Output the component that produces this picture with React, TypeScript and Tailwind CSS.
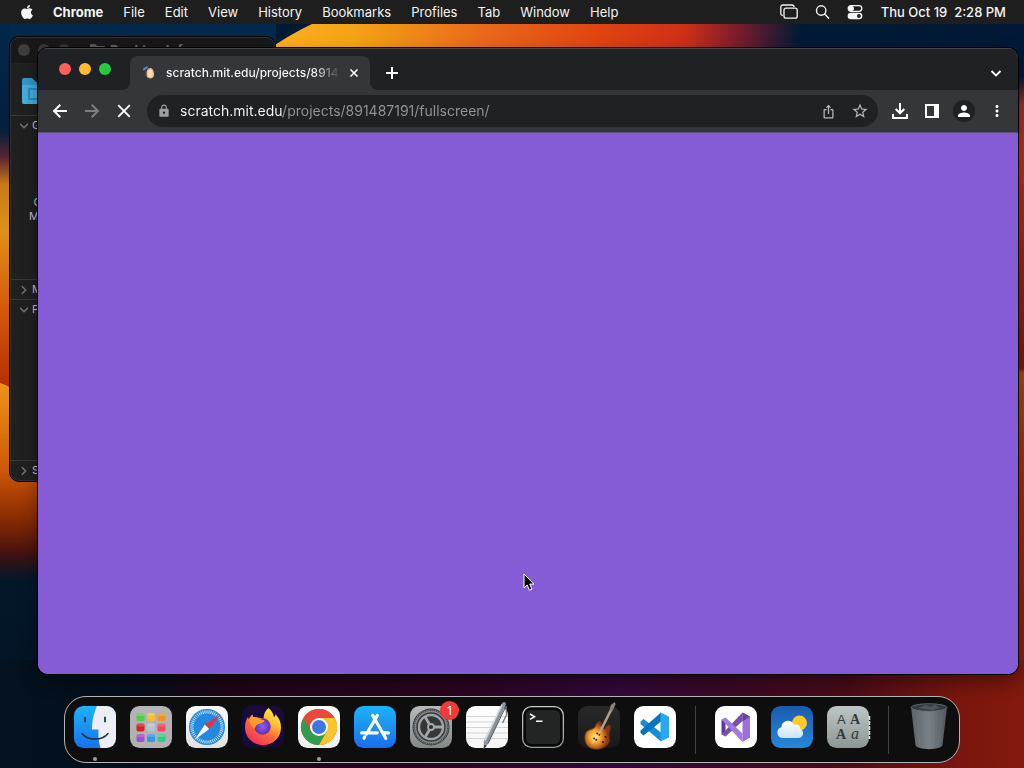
import React from "react";
import { FaApple } from "react-icons/fa";
import { MdIosShare, MdLock, MdStarBorder, MdMoreVert, MdPerson } from "react-icons/md";

const menus = ["File", "Edit", "View", "History", "Bookmarks", "Profiles", "Tab", "Window", "Help"];

function Wallpaper() {
  return (
    <svg
      className="absolute inset-0 h-full w-full"
      viewBox="0 0 1024 768"
      preserveAspectRatio="none"
      aria-hidden="true"
    >
      <defs>
        <linearGradient id="wTop" x1="276" x2="800" y1="0" y2="0" gradientUnits="userSpaceOnUse">
          <stop offset="0" stopColor="#fcae1c" />
          <stop offset=".15" stopColor="#f5a215" />
          <stop offset=".4" stopColor="#e9671a" />
          <stop offset=".62" stopColor="#df4410" />
          <stop offset=".78" stopColor="#cd3018" />
          <stop offset=".88" stopColor="#7c1c2c" />
          <stop offset="1" stopColor="#001a35" />
        </linearGradient>
        <linearGradient id="wLeft" x1="0" x2="0" y1="0" y2="768" gradientUnits="userSpaceOnUse">
          <stop offset="0" stopColor="#02284c" />
          <stop offset=".17" stopColor="#04203c" />
          <stop offset=".205" stopColor="#5a2433" />
          <stop offset=".24" stopColor="#c67a15" />
          <stop offset=".3" stopColor="#e09018" />
          <stop offset=".4" stopColor="#d65a0c" />
          <stop offset=".5" stopColor="#b82f04" />
          <stop offset=".6" stopColor="#bd4004" />
          <stop offset=".67" stopColor="#8a2603" />
          <stop offset=".72" stopColor="#431010" />
          <stop offset=".755" stopColor="#03172a" />
          <stop offset="1" stopColor="#03131f" />
        </linearGradient>
        <linearGradient id="wLobe" x1="0" x2="0" y1="383" y2="560" gradientUnits="userSpaceOnUse">
          <stop offset="0" stopColor="#ee9418" />
          <stop offset=".5" stopColor="#cf5606" />
          <stop offset="1" stopColor="#5a1706" stopOpacity="0" />
        </linearGradient>
        <linearGradient id="wRight" x1="0" x2="0" y1="0" y2="768" gradientUnits="userSpaceOnUse">
          <stop offset="0" stopColor="#001a35" />
          <stop offset=".1" stopColor="#03193a" />
          <stop offset=".135" stopColor="#96302c" />
          <stop offset=".2" stopColor="#b9321c" />
          <stop offset=".48" stopColor="#7a1813" />
          <stop offset=".485" stopColor="#a04a14" />
          <stop offset=".62" stopColor="#a22c0c" />
          <stop offset="1" stopColor="#7c180e" />
        </linearGradient>
        <linearGradient id="wBottom">
          <stop offset="0" stopColor="#03131f" />
          <stop offset=".13" stopColor="#050d1c" />
          <stop offset=".22" stopColor="#200617" />
          <stop offset=".45" stopColor="#2a0520" />
          <stop offset=".6" stopColor="#33083a" />
          <stop offset=".7" stopColor="#3a0928" />
          <stop offset=".82" stopColor="#480b19" />
          <stop offset=".94" stopColor="#7a160e" />
          <stop offset="1" stopColor="#821a0c" />
        </linearGradient>
      </defs>
      <rect width="1024" height="768" fill="#001a35" />
      <rect width="276" height="768" fill="url(#wLeft)" />
      <rect x="10" width="266" height="140" fill="#02284c" />
      <path d="M0 383Q24 391 40 412V570H0Z" fill="url(#wLobe)" />
      <path d="M262 54Q286 36 318 21H800V60H262Z" fill="url(#wTop)" />
      <rect x="1000" width="24" height="768" fill="url(#wRight)" />
      <rect y="660" width="1024" height="108" fill="url(#wBottom)" />
    </svg>
  );
}

function MenuBar() {
  return (
    <header className="relative flex h-6 items-center justify-between bg-[#1e1e1e] pr-[18px] pl-[19px] text-[13px] leading-6 text-[#f4f4f4]">
      <nav className="flex items-center gap-5" aria-label="Application menu">
        <button aria-label="Apple menu" className="-mr-[2px]">
          <FaApple size={16} />
        </button>
        <button className="font-bold">Chrome</button>
        {menus.map((m) => (
          <button key={m}>{m}</button>
        ))}
      </nav>
      <div className="flex items-center">
        <button aria-label="Screen mirroring" className="mr-[17px]">
          <svg width="18" height="16" viewBox="0 0 18 16" fill="none" stroke="currentColor" strokeWidth="1.3">
            <path d="M2.800 11.500A2 2 0 0 1 .8 9.500V3A2 2 0 0 1 2.800 1h9.200a2 2 0 0 1 2 2" />
            <rect x="4" y="4.200" width="13.200" height="10" rx="2" />
          </svg>
        </button>
        <button aria-label="Spotlight search" className="mr-[17px]">
          <svg width="15" height="16" viewBox="0 0 15 16" fill="none" stroke="currentColor" strokeWidth="1.4" strokeLinecap="round">
            <circle cx="6.200" cy="6.500" r="4.700" />
            <path d="m9.700 10 4 4.200" />
          </svg>
        </button>
        <button aria-label="Control center" className="mr-[18px]">
          <svg width="16" height="16" viewBox="0 0 16 16">
            <rect x="1.200" y="1.700" width="13.600" height="5.600" rx="2.800" fill="none" stroke="currentColor" strokeWidth="1.300" />
            <circle cx="4.200" cy="4.500" r="2.700" fill="currentColor" />
            <rect x=".6" y="8.700" width="14.800" height="6.600" rx="3.300" fill="currentColor" />
            <circle cx="11.900" cy="12" r="1.900" fill="#1e1e1e" />
          </svg>
        </button>
        <time className="font-medium whitespace-pre">Thu Oct 19  2:28 PM</time>
      </div>
    </header>
  );
}

function Chevron({ open }: { open?: boolean }) {
  return (
    <svg width="10" height="10" viewBox="0 0 10 10" fill="none" stroke="#777" strokeWidth="1.400" strokeLinecap="round">
      <path d={open ? "M1.500 3.200 5 6.700 8.500 3.200" : "M3.200 1.500 6.700 5 3.200 8.500"} />
    </svg>
  );
}

function InfoRow({ label, open }: { label: string; open?: boolean }) {
  return (
    <button className="flex h-5 w-full items-center gap-[3px] border-t border-[#393939] pl-[9px] text-left">
      <Chevron open={open} />
      {label}
    </button>
  );
}

function InfoWindow() {
  return (
    <section
      aria-label="Desktop Info"
      className="absolute top-3 left-[9px] h-[446px] w-[267px] overflow-hidden rounded-[10px] border border-black bg-[#202021] text-[11px] text-[#c4c4c4] outline outline-[#303030] -outline-offset-2"
    >
      <div className="flex h-[26px] items-center bg-[#181818] pl-2">
        <div className="flex gap-2">
          <span className="size-3 rounded-full bg-[#3d3d3d]" />
          <span className="size-3 rounded-full bg-[#363636]" />
          <span className="size-3 rounded-full bg-[#363636]" />
        </div>
        <svg className="ml-5" width="15" height="14" viewBox="0 0 15 14" aria-hidden="true">
          <path d="M0 2a1 1 0 0 1 1-1h4l2 2h7a1 1 0 0 1 1 1v8H0Z" fill="#5c5c5c" />
        </svg>
        <h2 className="ml-[5px] text-[13px] leading-5 font-bold text-[#666]">Desktop Info</h2>
      </div>
      <div className="h-[52px] pt-[15px] pl-3">
        <svg width="34" height="26" viewBox="0 0 34 26" aria-hidden="true">
          <path d="M0 2a2 2 0 0 1 2-2h8l4 4h18a2 2 0 0 1 2 2v18a2 2 0 0 1-2 2H2a2 2 0 0 1-2-2Z" fill="#3299c9" />
          <path d="M0 7h34v17a2 2 0 0 1-2 2H2a2 2 0 0 1-2-2Z" fill="#45afe0" />
          <path d="M7 11h20v10H7Z" fill="none" stroke="#2d89b5" strokeWidth="2" />
        </svg>
      </div>
      <InfoRow label="General:" open />
      <dl className="h-36 w-[68px] pt-[60px] text-right leading-[14px]">
        <dt>Created:</dt>
        <dt>Modified:</dt>
      </dl>
      <InfoRow label="More Info:" />
      <InfoRow label="Preview:" open />
      <div className="h-[141px]" />
      <InfoRow label="Sharing &amp; Permissions:" />
    </section>
  );
}

function TabStrip() {
  return (
    <div className="flex h-[42px] items-end border-t border-[#45464a] bg-[#202124] pl-[21px]">
      <div className="flex gap-2 self-start pt-[14px]">
        <button aria-label="Close window" className="size-3 rounded-full bg-[#ff5f57]" />
        <button aria-label="Minimize window" className="size-3 rounded-full bg-[#febc2e]" />
        <button aria-label="Zoom window" className="size-3 rounded-full bg-[#28c840]" />
      </div>
      <div className="relative ml-[19px] flex h-[34px] w-60 items-center rounded-t-lg bg-[#35363a] pl-[13px] text-white">
        <span className="absolute bottom-0 -left-2 size-2 bg-[radial-gradient(circle_at_0_0,#202124_8px,#35363a_8px)]" />
        <span className="absolute -right-2 bottom-0 size-2 bg-[radial-gradient(circle_at_100%_0,#202124_8px,#35363a_8px)]" />
        <svg width="13" height="14" viewBox="0 0 13 14" aria-hidden="true">
          <path d="M.8 3.500 4 1.200" stroke="#5b8fe0" strokeWidth="1.800" strokeLinecap="round" />
          <path d="M4.200 4C5 2 8 1 9.500 3c1.300 2 2 5 1.300 7.300C10 13 5 13.200 3.800 10.500 3 8.500 3.300 6 4.200 4Z" fill="#efb87e" />
          <path d="M5.500 4.500c1-1 2.800-1.300 3.500 0 .8 1.700 1 4 .3 5.500-.8 1.500-3.400 1.200-4 0-.8-1.600-.6-4 .2-5.500Z" fill="#ffe0b7" />
          <path d="M3 5v5" stroke="#7b5330" />
        </svg>
        <a
          href="#tab"
          className="ml-[10px] w-[172px] overflow-hidden bg-[linear-gradient(90deg,#fff_148px,#35363a_174px)] bg-clip-text text-[12px] leading-4 font-medium whitespace-nowrap text-transparent"
        >
          scratch.mit.edu/projects/8914
        </a>
        <button aria-label="Close tab" className="ml-[11px]">
          <svg width="10" height="10" viewBox="0 0 10 10" stroke="#fff" strokeWidth="1.600">
            <path d="m1.500 1.500 7 7m0-7-7 7" />
          </svg>
        </button>
      </div>
      <button aria-label="New tab" className="mb-[11px] ml-4">
        <svg width="12" height="12" viewBox="0 0 12 12" stroke="#fff" strokeWidth="2">
          <path d="M6 0v12M0 6h12" />
        </svg>
      </button>
      <button aria-label="Search tabs" className="mr-4 mb-[11px] ml-auto">
        <svg width="12" height="12" viewBox="0 0 12 12" fill="none" stroke="#fff" strokeWidth="1.800">
          <path d="m1.500 4 4.500 4.500L10.500 4" />
        </svg>
      </button>
    </div>
  );
}

function Toolbar() {
  return (
    <div className="flex h-[43px] items-center border-b border-[#5a4f7c] bg-[#35363a] pl-[14px] text-white">
      <button aria-label="Back">
        <svg width="16" height="16" viewBox="0 0 16 16" fill="none" stroke="#fff" strokeWidth="2">
          <path d="M15 8H2.500M8.300 1.700 2 8l6.300 6.300" />
        </svg>
      </button>
      <button aria-label="Forward" className="ml-4">
        <svg width="16" height="16" viewBox="0 0 16 16" fill="none" stroke="#7d7e82" strokeWidth="2">
          <path d="M1 8h12.500M7.700 1.700 14 8l-6.300 6.300" />
        </svg>
      </button>
      <button aria-label="Stop loading" className="ml-4">
        <svg width="16" height="16" viewBox="0 0 16 16" stroke="#fff" strokeWidth="1.900">
          <path d="m2.200 2.200 11.600 11.600m0-11.600L2.200 13.800" />
        </svg>
      </button>
      <div className="ml-[15px] flex h-8 flex-1 items-center rounded-full bg-[#202124] pr-[9px] pl-[10px] text-[#b5b8bc]">
        <MdLock size={14} color="#9aa0a6" />
        <input
          aria-label="Address"
          defaultValue="scratch.mit.edu/projects/891487191/fullscreen/"
          spellCheck={false}
          className="ml-[9px] min-w-0 flex-1 bg-[linear-gradient(90deg,#fff_103px,#92969c_103px)] bg-clip-text text-[14px] leading-5 text-transparent caret-white outline-none"
        />
        <button aria-label="Share">
          <MdIosShare size={15} />
        </button>
        <button aria-label="Bookmark this page" className="ml-[15px]">
          <MdStarBorder size={18} />
        </button>
      </div>
      <button aria-label="Downloads" className="ml-[14px]">
        <svg width="16" height="16" viewBox="0 0 16 16" fill="none" stroke="#fff" strokeWidth="2">
          <path d="M8 0v10M3.700 6 8 10.300 12.300 6M1 11v4h14v-4" />
        </svg>
      </button>
      <button aria-label="Side panel" className="ml-[17px]">
        <svg width="14" height="14" viewBox="0 0 14 14" fill="#fff" fillRule="evenodd">
          <path d="M0 0h14v14H0ZM2 2v10h7V2Z" />
        </svg>
      </button>
      <button aria-label="Profile" className="ml-[14px] flex size-[22px] items-center justify-center rounded-full bg-[#202124]">
        <MdPerson size={18} />
      </button>
      <button aria-label="More options" className="mr-3 ml-[13px]">
        <MdMoreVert size={18} />
      </button>
    </div>
  );
}

function Tile({ id, from, to, children }: { id: string; from: string; to: string; children?: React.ReactNode }) {
  return (
    <svg width="42" height="42" viewBox="0 0 42 42" overflow="visible" aria-hidden="true">
      <defs>
        <linearGradient id={id} x1="0" x2="0" y1="0" y2="1">
          <stop stopColor={from} />
          <stop offset="1" stopColor={to} />
        </linearGradient>
        <clipPath id={id + "-clip"}>
          <rect width="42" height="42" rx="9.500" />
        </clipPath>
      </defs>
      <rect width="42" height="42" rx="9.500" fill={`url(#${id})`} />
      {children}
    </svg>
  );
}

const padColors = ["#4fce4a", "#f5bd30", "#f0932a", "#d32424", "#b6c4ca", "#ea4a62", "#a04ecb", "#3296e8", "#37c983"];
const ticks = Array.from({ length: 48 }, (_, i) => i * 7.5);

const finder = (
  <Tile id="finder" from="#1fb3fb" to="#1771ee">
    <g clipPath="url(#finder-clip)">
      <path d="M23 0C20 7 18 14 18 23.500h6.500C24 31 25 37 26.500 42H42V0Z" fill="#eceef3" />
    </g>
    <path d="M11 11.500v4M31 11.500v4" stroke="#17384f" strokeWidth="1.800" strokeLinecap="round" />
    <path d="M8 27.500c6 7.500 20 7.500 26 0" fill="none" stroke="#1f3445" strokeWidth="1.600" strokeLinecap="round" />
  </Tile>
);

const launchpad = (
  <Tile id="launchpad" from="#b4b4b6" to="#b0b0b3">
    {padColors.map((c, i) => (
      <g key={c} transform={`translate(${6.5 + (i % 3) * 10.5} ${7 + Math.floor(i / 3) * 10.5})`}>
        <rect width="8" height="8" rx="1.800" fill={c} />
        <rect width="8" height="3" rx="1.500" fill="#fff" opacity=".18" />
      </g>
    ))}
  </Tile>
);

const safari = (
  <Tile id="safari" from="#fafafa" to="#dfe1e4">
    <circle cx="21" cy="21" r="18" fill="#2388df" />
    {ticks.map((a) => (
      <path key={a} d="M21 4.300v3.200" stroke="#e9f5ff" strokeWidth=".8" transform={`rotate(${a} 21 21)`} />
    ))}
    <path d="m35 8.500-16.200 10 4.400 4.600Z" fill="#e9303b" />
    <path d="m8.500 34 10.300-15.500 4.400 4.600Z" fill="#f8f9fa" />
  </Tile>
);

const firefox = (
  <Tile id="firefox" from="#1b0b3c" to="#140a38">
    <defs>
      <linearGradient id="ffBody" x1=".85" y1="0" x2=".2" y2="1">
        <stop offset="0" stopColor="#fff04f" />
        <stop offset=".3" stopColor="#ffc52f" />
        <stop offset=".6" stopColor="#ff673b" />
        <stop offset="1" stopColor="#ee2860" />
      </linearGradient>
      <radialGradient id="ffCore">
        <stop stopColor="#8a61f5" />
        <stop offset="1" stopColor="#622bb4" />
      </radialGradient>
    </defs>
    <path
      d="M26.500 2c2.500 2.300 5 5.200 5.500 9.200 1-.8 1.500-2 1.200-3.300 4 4 6 8.500 5.800 14C38.600 32 31 39 21.300 39 11 39 3 31.500 3 21.500 3 17 4.200 13.600 6 11l.8 2.600C7.500 11.400 8.700 9.700 10.500 8.500L11.500 12c2-.6 3.800-.7 5.500-.2l4.600.7C21.400 8 23.500 4.500 26.500 2Z"
      fill="url(#ffBody)"
    />
    <circle cx="20.500" cy="20.500" r="8.200" fill="url(#ffCore)" />
    <path d="M8 11.500c3.500-1.200 7-.6 9.500 1.500l5 1.200c-.5 2.200-2.500 2.900-5 3.500-3 .7-4.200 2-4.500 5C9 20.500 6.500 15.500 8 11.500Z" fill="#ff9a2c" />
  </Tile>
);

const chrome = (
  <Tile id="chrome" from="#fff" to="#eeeeec">
    <circle cx="21" cy="21" r="18" fill="#e9493a" />
    <path d="M5.400 12A18 18 0 0 0 21 39l7.800-13.500L21 21l-7.800 4.500Z" fill="#2f9d4b" />
    <path d="M36.600 12A18 18 0 0 1 21 39l7.800-13.500L28 16l-7-4Z" fill="#fbc42c" />
    <path d="M5.400 12a18 18 0 0 1 31.200 0H21a9 9 0 0 0-7.800 13.500Z" fill="#e9493a" />
    <circle cx="21" cy="21" r="9" fill="#fff" />
    <circle cx="21" cy="21" r="7" fill="#3b78e0" />
  </Tile>
);

const appStore = (
  <Tile id="appstore" from="#1db3f8" to="#1a6eec">
    <g stroke="#fff" strokeWidth="3.200" strokeLinecap="round">
      <path d="M23.300 9.500 12.500 28M18.700 9.500l13 22.800M7.500 26.800h15.700M29.500 26.800h5M10.700 31l-.7 1.200" />
    </g>
  </Tile>
);

const settings = (
  <Tile id="settings" from="#b7babb" to="#858888">
    <circle cx="21" cy="21" r="18.500" fill="#3a3e40" />
    <circle cx="21" cy="21" r="15.500" fill="none" stroke="#85898c" strokeWidth="1.500" />
    <circle cx="21" cy="21" r="17" fill="none" stroke="#85898c" strokeWidth="1.200" strokeDasharray="1.200 1" />
    <circle cx="21" cy="21" r="12" fill="#33373a" stroke="#a0a4a6" strokeWidth="2.400" />
    <path d="M21 21h12M21 21l-6-10.400M21 21l-6 10.400" stroke="#a5a8aa" strokeWidth="2.800" />
    <circle cx="21" cy="21" r="3" fill="#2d3032" stroke="#a5a8aa" strokeWidth="1.800" />
  </Tile>
);

const textEdit = (
  <Tile id="textedit" from="#fff" to="#f5f5f5">
    <path d="M0 10.500h42M0 16h42M0 21.500h42M0 27h42M0 32.500h42" stroke="#cfcfcf" strokeWidth=".9" />
    <path d="M36.500-3.200c1.800-1.700 4 0 3.300 2L23 36.500l-5.500 7 .3-8.500Z" fill="#8b949a" />
    <path d="M36-1.500 19 34.500" stroke="#d8dfe3" strokeWidth="1.500" />
    <path d="M39.800.5 22 37.500" stroke="#525c63" strokeWidth="1" />
    <path d="m40 0 .5 9-4 8" fill="none" stroke="#707b82" strokeWidth="1.300" />
    <path d="m18.500 39-1.200 4.500 3.500-4" fill="#353b40" />
  </Tile>
);

const terminal = (
  <Tile id="terminal" from="#c6c8c9" to="#9a9c9d">
    <rect x="1.300" y="1.300" width="39.400" height="39.400" rx="8.300" fill="#080808" />
    <rect x="4" y="4" width="34" height="34" rx="5.500" fill="#232525" />
    <path d="m8 8 4.500 2.700L8 13.400M14 15.300h6.500" fill="none" stroke="#fff" strokeWidth="1.500" />
  </Tile>
);

const garageBand = (
  <Tile id="garageband" from="#292929" to="#191919">
    <defs>
      <radialGradient id="gbBody" cx=".4" cy=".55">
        <stop stopColor="#fff08a" />
        <stop offset=".45" stopColor="#f7a52d" />
        <stop offset="1" stopColor="#8b3518" />
      </radialGradient>
    </defs>
    <path
      d="M8 26c2.500-3 6-2 8.500-4.500 1.500-2 1.500-5.500 5-6 2.500 0 2 2.500 1.700 4.500l3.300 3c1.500-1.500 1.800-4 4.300-4 2.500.3 1.700 3.500 1.200 5.500-.6 2.500-1.500 4-.5 6.500 1.500 5-2.500 10.500-10 12C14 44.500 7.500 40.500 7 34.500c-.3-3-.5-6 1-8.500Z"
      fill="url(#gbBody)"
      stroke="#5b2f1f"
      strokeWidth=".8"
    />
    <path d="M22.500 25 33 4" stroke="#b59c88" strokeWidth="2.600" />
    <path d="m31.500 4.500 1.300-5.500 4-3 .7 2.300-3.200 7.200Z" fill="#8b8580" />
    <path d="m18.500 27 3.500 2.200M15.500 32l3.500 2.200" stroke="#3e2317" strokeWidth="1.600" />
    <path d="M22.500 25 14 38" stroke="#f5dfb5" strokeWidth=".8" />
    <circle cx="27.500" cy="31" r="1" fill="#2d160f" />
    <circle cx="25" cy="36" r="1" fill="#2d160f" />
  </Tile>
);

const vsCode = (
  <Tile id="vscode" from="#fff" to="#fff">
    <path d="M6.500 15.500 9.500 13 27 26.500v9L6.500 18Z" fill="#158bdb" />
    <path d="m6.500 27 3 2.500L27 15.500v-9L6.500 24.500Z" fill="#0873be" />
    <path d="m26.500 6.500 8.500 4v21l-8.500 4Z" fill="#28a8ee" />
  </Tile>
);

const visualStudio = (
  <Tile id="vs" from="#fff" to="#fff">
    <path d="m6.500 13.500 4 2.500v10l-4 2.500Z" fill="#5c3c91" />
    <path d="m10.500 30.500-4-2L27.500 6.500V15Z" fill="#7551b4" />
    <path d="m10.500 11.500 17 16v8.500L6.500 13.500Z" fill="#a07ade" />
    <path d="m27.500 6.500 7.500 4v21l-7.500 4.500Z" fill="#9b70dc" />
    <path d="m27.500 6.500 7.500 4-7.500 5Z" fill="#6840a2" />
  </Tile>
);

const weather = (
  <Tile id="weather" from="#1a5bb0" to="#2488dc">
    <defs>
      <linearGradient id="cloud" x1="0" x2="0" y1="0" y2="1">
        <stop stopColor="#fff" />
        <stop offset="1" stopColor="#c9e3fb" />
      </linearGradient>
    </defs>
    <circle cx="28.500" cy="17" r="7.500" fill="#ffc928" />
    <path d="M11.500 32a5.500 5.500 0 0 1-1-10.800c0-7 10-8.800 12.500-2.500 4-1 6.500 1.500 6.500 4.300 4.500 2.500 2.500 9-2 9Z" fill="url(#cloud)" />
  </Tile>
);

const fontBook = (
  <Tile id="fontbook" from="#bec5c5" to="#8d9595">
    <path d="M42.500 10v23" stroke="#dfe4e4" strokeWidth="1.500" strokeDasharray="4 1" />
    <g fill="#343a3a" fontSize="14">
      <text x="10" y="18" fontFamily="Liberation Sans, sans-serif" fontSize="13">A</text>
      <text x="23" y="18" fontFamily="Liberation Serif, serif" fontWeight="700">A</text>
      <text x="9" y="33" fontFamily="Liberation Serif, serif" fontWeight="700">A</text>
      <text x="24" y="33" fontFamily="Liberation Serif, serif" fontStyle="italic" fontSize="16">a</text>
    </g>
  </Tile>
);

const trash = (
  <svg width="42" height="42" viewBox="0 0 42 42" overflow="visible" aria-hidden="true">
    <defs>
      <linearGradient id="bin">
        <stop stopColor="#5b6369" />
        <stop offset=".5" stopColor="#7a8186" />
        <stop offset="1" stopColor="#50575d" />
      </linearGradient>
    </defs>
    <path d="M3 1h36l-4.500 38c-.8 5.500-26.200 5.500-27 0Z" fill="url(#bin)" />
    <ellipse cx="21" cy="1.500" rx="18" ry="3.800" fill="#343a3e" stroke="#6d7478" strokeWidth=".8" />
    <path d="M10 2 18-1l4 2 5-2 5 3-8 2Z" fill="#50575b" />
    <path d="m9 9 3 31M17 9l1 33M26 9l-1 33M34 9l-4 31" stroke="#91989d" strokeWidth=".6" opacity=".3" />
  </svg>
);

type DockItem = { name: string; icon: React.ReactNode; running?: boolean; badge?: string };

const groups: DockItem[][] = [
  [
    { name: "Finder", icon: finder, running: true },
    { name: "Launchpad", icon: launchpad },
    { name: "Safari", icon: safari },
    { name: "Firefox", icon: firefox },
    { name: "Chrome", icon: chrome, running: true },
    { name: "App Store", icon: appStore },
    { name: "System Settings", icon: settings, badge: "1" },
    { name: "TextEdit", icon: textEdit },
    { name: "Terminal", icon: terminal },
    { name: "GarageBand", icon: garageBand },
    { name: "Visual Studio Code", icon: vsCode },
  ],
  [
    { name: "Visual Studio", icon: visualStudio },
    { name: "Weather", icon: weather },
    { name: "Font Book", icon: fontBook },
  ],
  [{ name: "Trash", icon: trash }],
];

function Dock() {
  return (
    <footer className="relative flex justify-center pt-[22px] pb-[5px]">
      <nav aria-label="Dock" className="flex gap-[14px] rounded-[22px] border border-[#b4b4b6] bg-[#0e0e0f] px-[9px] pt-[9px] pb-[14px]">
        {groups.map((items, g) => (
          <React.Fragment key={g}>
            {g > 0 && <span className="mx-[5px] -mb-[6px] w-px bg-[#424244]" />}
            {items.map((item) => (
              <button key={item.name} aria-label={item.name} className="relative size-[42px]">
                {item.icon}
                {item.badge && (
                  <span className="absolute -top-[5px] -right-[7px] size-[19px] rounded-full bg-[#f03a37] text-center text-[12px] leading-[19px] text-white">
                    {item.badge}
                  </span>
                )}
                {item.running && <span className="absolute -bottom-[13px] left-[19px] size-1 rounded-full bg-[#a0a0a0]" />}
              </button>
            ))}
          </React.Fragment>
        ))}
      </nav>
    </footer>
  );
}

export default function App() {
  return (
    <div className="relative flex min-h-screen flex-col overflow-hidden bg-[#001a35] font-['Inter','Liberation_Sans',sans-serif]">
      <Wallpaper />
      <MenuBar />
      <main className="relative flex flex-1 pt-6 pr-[6px] pl-[38px]">
        <InfoWindow />
        <section
          aria-label="Chrome"
          className="relative flex flex-1 flex-col overflow-hidden rounded-[10px] bg-[#855cd6] shadow-[0_0_0_1px_#000,0_8px_18px_rgba(0,0,0,0.4)]"
        >
          <TabStrip />
          <Toolbar />
          <div className="flex-1 bg-[#855cd6]" />
        </section>
        <svg
          className="absolute top-[549px] left-[523px]"
          width="12"
          height="19"
          viewBox="0 0 12 19"
          aria-hidden="true"
        >
          <path d="M1 1v14l3.200-3 2.300 5.300 2.500-1.100-2.300-5.100H11Z" fill="#000" stroke="#fff" strokeWidth="1" />
        </svg>
      </main>
      <Dock />
    </div>
  );
}
